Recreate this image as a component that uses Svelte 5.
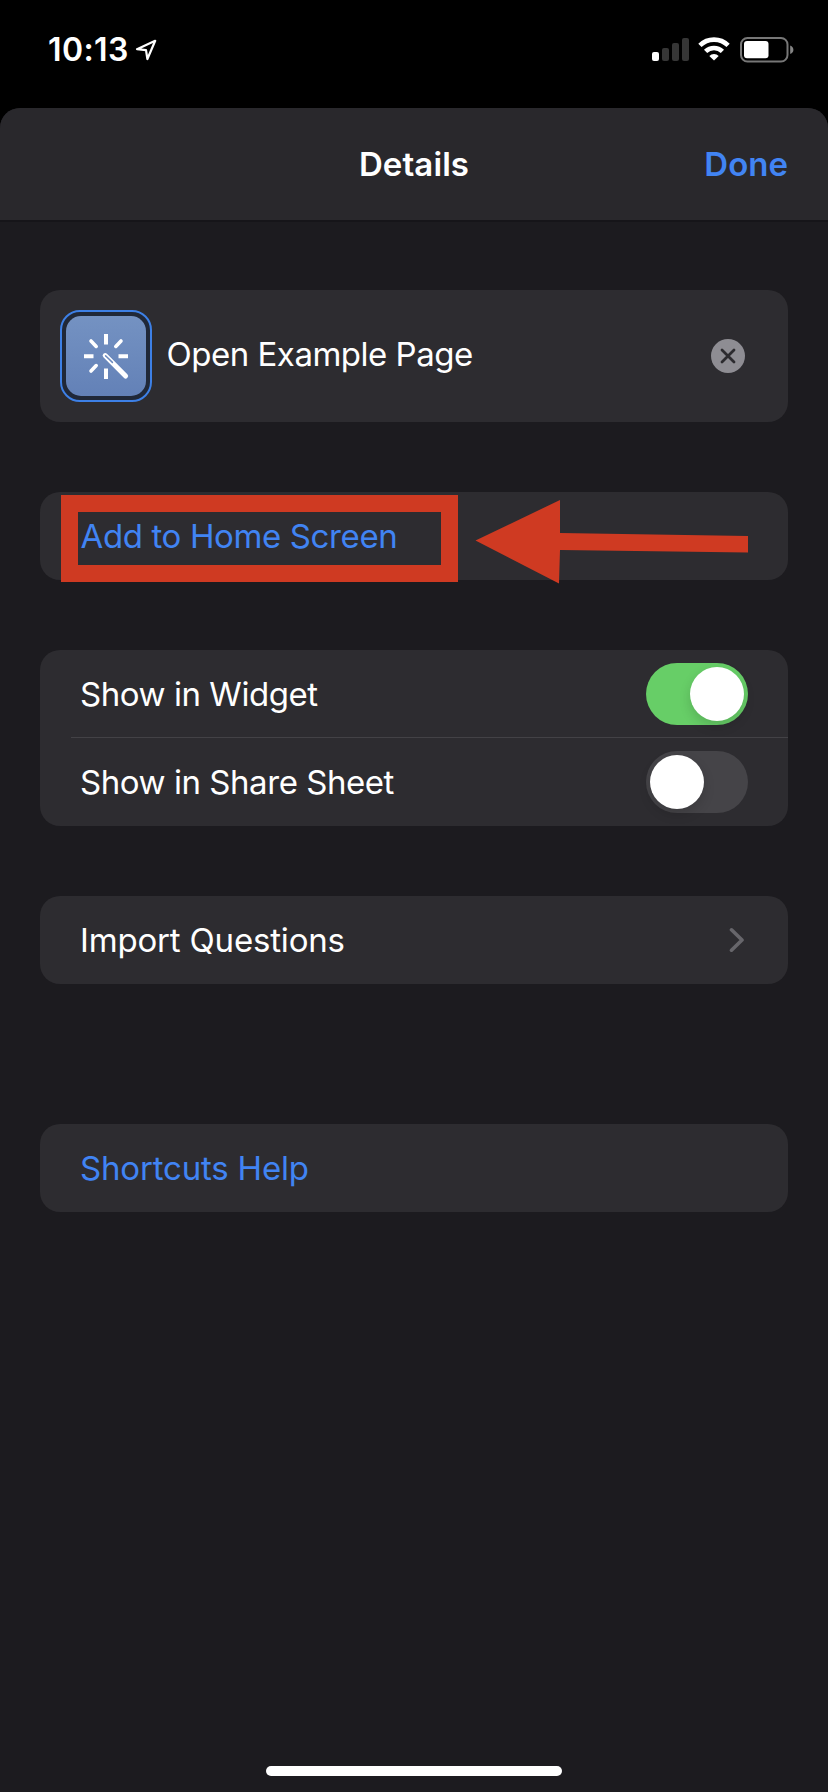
<script>
  let widget = $state(true);
  let shareSheet = $state(false);
  const bars = [9, 13, 18, 23];
</script>

{#snippet toggle(on, flip, label)}
  <button class="toggle" class:on role="switch" aria-checked={on} aria-label={label} onclick={flip}>
    <span class="knob"></span>
  </button>
{/snippet}

<div class="screen">
  <div class="status">
    <div class="clock">
      <span class="time">10:13</span>
      <svg width="22" height="22" viewBox="0 0 22 22">
        <path d="M2 10.2 20.2 1.8 12.4 20 11 11.2Z" fill="none" stroke="#fff" stroke-width="2.2" stroke-linejoin="round" />
      </svg>
    </div>
    <div class="indicators">
      <div class="signal">
        {#each bars as h, i}
          <span class:lit={i === 0} style="height:{h}px"></span>
        {/each}
      </div>
      <svg class="wifi" width="32" height="24" viewBox="0 0 32 24">
        <g fill="none" stroke="#fff" stroke-width="4.6">
          <path d="M1.9 8.4a20 20 0 0 1 28.2 0" />
          <path d="M7.6 14.4a12 12 0 0 1 16.8 0" />
        </g>
        <path d="M16 23.6 11.3 18.9a6.7 6.7 0 0 1 9.4 0Z" fill="#fff" />
      </svg>
      <svg class="battery" width="54" height="26" viewBox="0 0 54 26">
        <rect x="1" y="1" width="46.5" height="23.5" rx="6.5" fill="none" stroke="#777" stroke-width="2" />
        <rect x="4" y="4" width="24.5" height="17.3" rx="3" fill="#fff" />
        <path d="M50.2 8.5q3.2 1.3 3.2 4.3t-3.2 4.3Z" fill="#858585" />
      </svg>
    </div>
  </div>

  <main class="sheet">
    <header>
      <h1>Details</h1>
      <button class="done">Done</button>
    </header>

    <div class="groups">
      <section class="card name">
        <div class="ring">
          <div class="tile">
            <svg width="80" height="80" viewBox="0 0 80 80">
              <g fill="none" stroke="#fff" stroke-width="4">
                <path d="M40 18v10.5M40 52.5V63M18 40.3h9.5M52.5 40.3H62" />
                <path d="M25 25l5.2 5.4M55 25l-5.2 5.4M25 55l5.2-5.4" stroke-linecap="round" stroke-width="3.6" />
                <path d="M39.2 39.6 59.6 60" stroke-width="5" stroke-linecap="round" />
              </g>
              <path d="M39.6 39.8 46.4 46.4" stroke="#6c8bbf" stroke-width="1.5" stroke-linecap="round" />
            </svg>
          </div>
        </div>
        <span class="label title">Open Example Page</span>
        <svg class="clear" width="34" height="34" viewBox="0 0 34 34">
          <circle cx="17" cy="17" r="17" fill="#8e8d93" />
          <path d="M11 11 23 23M23 11 11 23" stroke="#2c2b2f" stroke-width="2.8" stroke-linecap="round" />
        </svg>
      </section>

      <section class="card">
        <div class="row">
          <span class="label blue add">Add to Home Screen</span>
        </div>
        <div class="highlight"></div>
        <svg class="arrow" width="274" height="85" viewBox="0 0 274 85">
          <path d="M1.5 41.5 86 1V34L274 37V53.5L86 51 85 84.5Z" fill="#cf3a22" />
        </svg>
      </section>

      <section class="card pair">
        <div class="row">
          <span class="label show">Show in Widget</span>
          {@render toggle(widget, () => (widget = !widget), 'Show in Widget')}
        </div>
        <div class="line"></div>
        <div class="row">
          <span class="label show">Show in Share Sheet</span>
          {@render toggle(shareSheet, () => (shareSheet = !shareSheet), 'Show in Share Sheet')}
        </div>
      </section>

      <section class="card">
        <div class="row">
          <span class="label loose">Import Questions</span>
          <svg class="chevron" width="16" height="26" viewBox="0 0 16 26">
            <path d="M2.5 2.8 13 13 2.5 23.2" fill="none" stroke="#67666b" stroke-width="3.6" stroke-linecap="round" stroke-linejoin="round" />
          </svg>
        </div>
      </section>

      <section class="card help">
        <div class="row">
          <span class="label blue loose">Shortcuts Help</span>
        </div>
      </section>
    </div>

    <div class="home"></div>
  </main>
</div>

<style>
  :global(body) { margin: 0; background: #000; }
  * { box-sizing: border-box; }
  button { border: 0; margin: 0; padding: 0; background: none; font: inherit; }
  svg { display: block; flex: none; }

  .screen {
    width: 828px;
    height: 1792px;
    display: flex;
    flex-direction: column;
    background: #000;
    color: #fff;
    font-family: Inter, "Liberation Sans", sans-serif;
    overflow: hidden;
  }

  .status {
    height: 108px;
    flex: none;
    display: flex;
    justify-content: space-between;
    align-items: flex-start;
    padding: 0 34px 0 48px;
  }
  .clock { display: flex; align-items: center; gap: 6.5px; height: 99px; }
  .time { font-size: 32px; font-weight: 600; letter-spacing: .4px; }
  .indicators { display: flex; align-items: flex-start; padding-top: 37px; }
  .signal { display: flex; align-items: flex-end; gap: 3px; height: 24px; }
  .signal span { width: 7px; border-radius: 2px; background: #363636; }
  .signal .lit { background: #fff; }
  .wifi { margin-left: 9px; }
  .battery { margin-left: 10px; }

  .sheet {
    flex: 1;
    display: flex;
    flex-direction: column;
    background: #1c1b1f;
    border-radius: 20px 20px 0 0;
    overflow: hidden;
  }
  header {
    height: 112px;
    flex: none;
    display: grid;
    grid-template-columns: 1fr auto 1fr;
    align-items: center;
    padding: 0 40px;
    background: #29282c;
    box-shadow: 0 2px 0 #161519;
    font-size: 33px;
    font-weight: 600;
  }
  h1 { grid-column: 2; margin: 0; font-size: 33px; font-weight: 600; letter-spacing: .1px; }
  .done { justify-self: end; color: #4184f3; }

  .groups {
    flex: 1;
    display: flex;
    flex-direction: column;
    gap: 70px;
    padding: 70px 40px 0;
  }
  .card { position: relative; background: #2d2c30; border-radius: 20px; }
  .name {
    height: 132px;
    display: flex;
    align-items: center;
    padding: 0 43px 0 20px;
  }
  .ring {
    width: 92px;
    height: 92px;
    padding: 4px;
    border: 2px solid #3d80e6;
    border-radius: 20px;
    background: #202838;
  }
  .tile {
    width: 80px;
    height: 80px;
    border-radius: 15px;
    overflow: hidden;
    background: linear-gradient(#7492c2, #6381b7);
  }
  .label { font-size: 33px; line-height: 40px; white-space: nowrap; }
  .title { flex: 1; margin-left: 14.5px; padding-bottom: 4px; letter-spacing: -.49px; }
  .add { letter-spacing: -.37px; margin-left: .5px; }
  .show { letter-spacing: -.45px; }
  .loose { letter-spacing: -.18px; }
  .blue { color: #4184f3; }

  .row {
    height: 88px;
    display: flex;
    align-items: center;
    justify-content: space-between;
    padding: 0 40px;
  }
  .pair { height: 176px; }
  .pair .row:first-child { height: 87px; }
  .line { height: 1px; margin-left: 31px; background: #434246; }

  .toggle {
    width: 102px;
    height: 62px;
    display: flex;
    align-items: center;
    padding: 0 4px;
    border-radius: 31px;
    background: #454448;
  }
  .toggle.on { background: #67ce67; justify-content: flex-end; }
  .knob {
    width: 54px;
    height: 54px;
    border-radius: 50%;
    background: #fff;
    box-shadow: 0 5px 12px rgba(0, 0, 0, .15);
  }
  .chevron { margin-right: 3px; }
  .help { margin-top: 70px; }

  .highlight {
    position: absolute;
    left: 21px;
    top: 3px;
    width: 397px;
    height: 87px;
    border: 17px solid #cf3a22;
  }
  .arrow { position: absolute; left: 434px; top: 7px; }

  .home {
    align-self: center;
    width: 296px;
    height: 10px;
    margin-bottom: 16px;
    border-radius: 5px;
    background: #fff;
  }
</style>
